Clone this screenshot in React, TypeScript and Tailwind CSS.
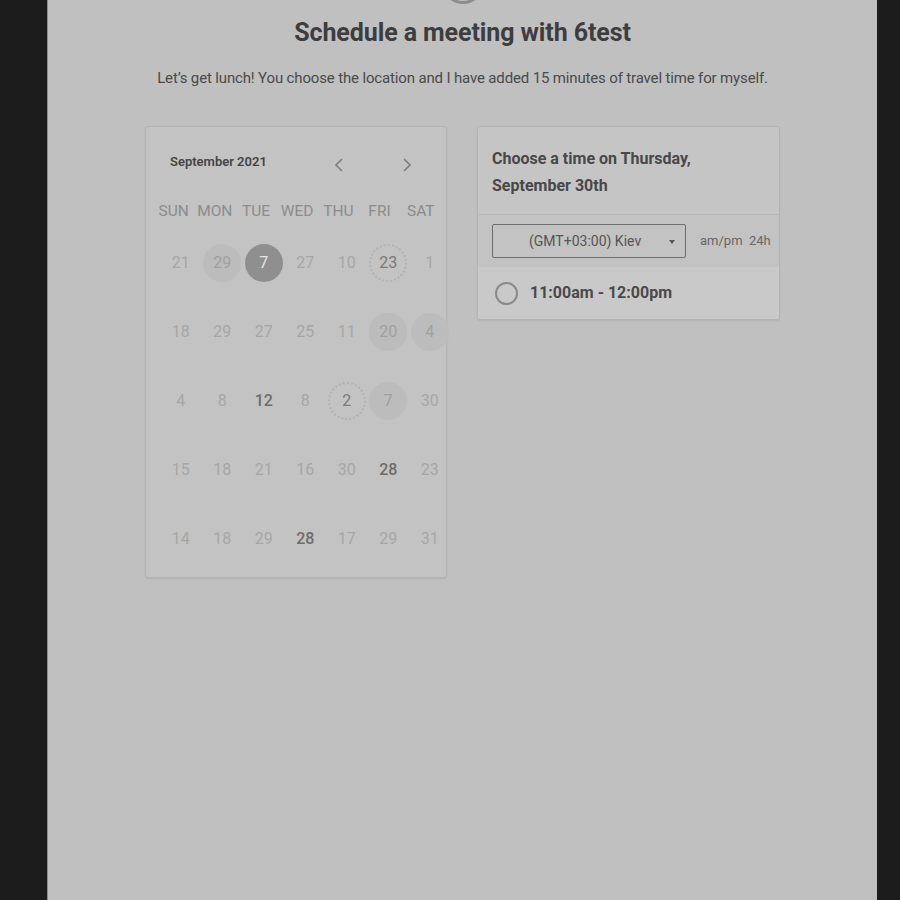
import React from "react";

type Day = { n: number; kind?: "dark" | "light" | "dotted"; bold?: boolean };

const rows: Day[][] = [
  [{ n: 21 }, { n: 29, kind: "light" }, { n: 7, kind: "dark" }, { n: 27 }, { n: 10 }, { n: 23, kind: "dotted" }, { n: 1 }],
  [{ n: 18 }, { n: 29 }, { n: 27 }, { n: 25 }, { n: 11 }, { n: 20, kind: "light" }, { n: 4, kind: "light" }],
  [{ n: 4 }, { n: 8 }, { n: 12, bold: true }, { n: 8 }, { n: 2, kind: "dotted" }, { n: 7, kind: "light" }, { n: 30 }],
  [{ n: 15 }, { n: 18 }, { n: 21 }, { n: 16 }, { n: 30 }, { n: 28, bold: true }, { n: 23 }],
  [{ n: 14 }, { n: 18 }, { n: 29 }, { n: 28, bold: true }, { n: 17 }, { n: 29 }, { n: 31 }],
];

const days = ["SUN", "MON", "TUE", "WED", "THU", "FRI", "SAT"];

function DayCell({ d }: { d: Day }) {
  let circle = "";
  let text = "text-[#a6a6a6]";
  if (d.kind === "dark") {
    circle = "bg-[#8f8f8f]";
    text = "text-[#e6e6e6]";
  } else if (d.kind === "light") {
    circle = "bg-[#bcbcbc]";
    text = "text-[#a0a0a0]";
  } else if (d.kind === "dotted") {
    circle = "bg-[#c3c3c3] border-2 border-dotted border-[#b3b3b3]";
    text = "text-[#7a7a7a]";
  }
  if (d.bold) text = "text-[#6c6c6c] font-medium";
  return (
    <div className="flex h-[69px] items-center justify-center">
      <div className={`flex h-[38px] w-[38px] items-center justify-center rounded-full text-[16px] ${circle} ${text}`}>
        {d.n}
      </div>
    </div>
  );
}

export default function App() {
  return (
    <div className="flex min-h-[900px] w-full bg-[#1c1c1c] pl-[47px]" style={{ fontFamily: "Roboto, 'Liberation Sans', sans-serif" }}>
      <div className="relative h-[900px] w-[830px] overflow-hidden border-l border-[#8a8a8a] bg-[#c0c0c0]">
        <div className="absolute left-[394px] top-[-58px] h-[62px] w-[42px] rounded-full border-[3px] border-[#8c8c8c]" />
        <div className="flex flex-col items-center pt-[16px]">
          <h1 className="text-[25px] font-bold leading-[33px] tracking-[-0.1px] text-[#3d3d3d]">Schedule a meeting with 6test</h1>
          <p className="mt-[18px] text-[15px] leading-[22px] tracking-[-0.15px] text-[#4a4a4a]">
            Let’s get lunch! You choose the location and I have added 15 minutes of travel time for myself.
          </p>
        </div>

        <div className="mt-[37px] flex items-start gap-[30px] pl-[97px]">
          {/* Calendar */}
          <div className="h-[452px] w-[302px] rounded-[3px] border border-[#b4b4b4] bg-[#c3c3c3] shadow-[0_1px_2px_rgba(0,0,0,0.08)]">
            <div className="flex items-center pl-[24px] pt-[24px]">
              <span className="text-[13px] font-semibold text-[#444]">September 2021</span>
              <span className="ml-[66px] mt-[6px] text-[#7d7d7d]">
                <svg width="12" height="16" viewBox="0 0 12 16" fill="none" stroke="currentColor" strokeWidth="1.6">
                  <path d="M9 2 L3 8 L9 14" />
                </svg>
              </span>
              <span className="ml-[56px] mt-[6px] text-[#7d7d7d]">
                <svg width="12" height="16" viewBox="0 0 12 16" fill="none" stroke="currentColor" strokeWidth="1.6">
                  <path d="M3 2 L9 8 L3 14" />
                </svg>
              </span>
            </div>
            <div className="mt-[27px] grid grid-cols-[repeat(7,41.2px)] pl-[7px] text-[15.5px] text-[#8c8c8c]">
              {days.map((d) => (
                <div key={d} className="text-center">{d}</div>
              ))}
            </div>
            <div className="mt-[5px] grid grid-cols-[repeat(7,41.5px)] pl-[14px]">
              {rows.flat().map((d, i) => (
                <DayCell key={i} d={d} />
              ))}
            </div>
          </div>

          {/* Time panel */}
          <div className="w-[303px] overflow-hidden rounded-[3px] border border-[#b4b4b4] bg-[#c3c3c3] shadow-[0_1px_2px_rgba(0,0,0,0.08)]">
            <div className="border-b border-[#b8b8b8] bg-[#c5c5c5] px-[14px] pb-[15px] pt-[18px] text-[16px] font-bold leading-[27px] text-[#484848]">
              Choose a time on Thursday,<br />September 30th
            </div>
            <div className="flex items-center px-[14px] py-[9px]">
              <div className="relative flex h-[34px] w-[194px] shrink-0 items-center rounded-[2px] border border-[#6e6e6e] pl-[36px] text-[14px] text-[#555]">
                (GMT+03:00) Kiev
                <span className="absolute right-[10px] top-[15px] h-0 w-0 border-x-[3.5px] border-t-[4px] border-x-transparent border-t-[#555]" />
              </div>
              <div className="ml-[14px] whitespace-nowrap text-[13px] text-[#666]">am/pm&nbsp; 24h</div>
            </div>
            <div className="flex h-[52px] items-center bg-[#c9c9c9] pl-[17px]">
              <div className="h-[23px] w-[23px] rounded-full border-2 border-[#8a8a8a]" />
              <span className="ml-[12px] text-[16px] font-bold text-[#4a4a4a]">11:00am - 12:00pm</span>
            </div>
          </div>
        </div>
      </div>
    </div>
  );
}
